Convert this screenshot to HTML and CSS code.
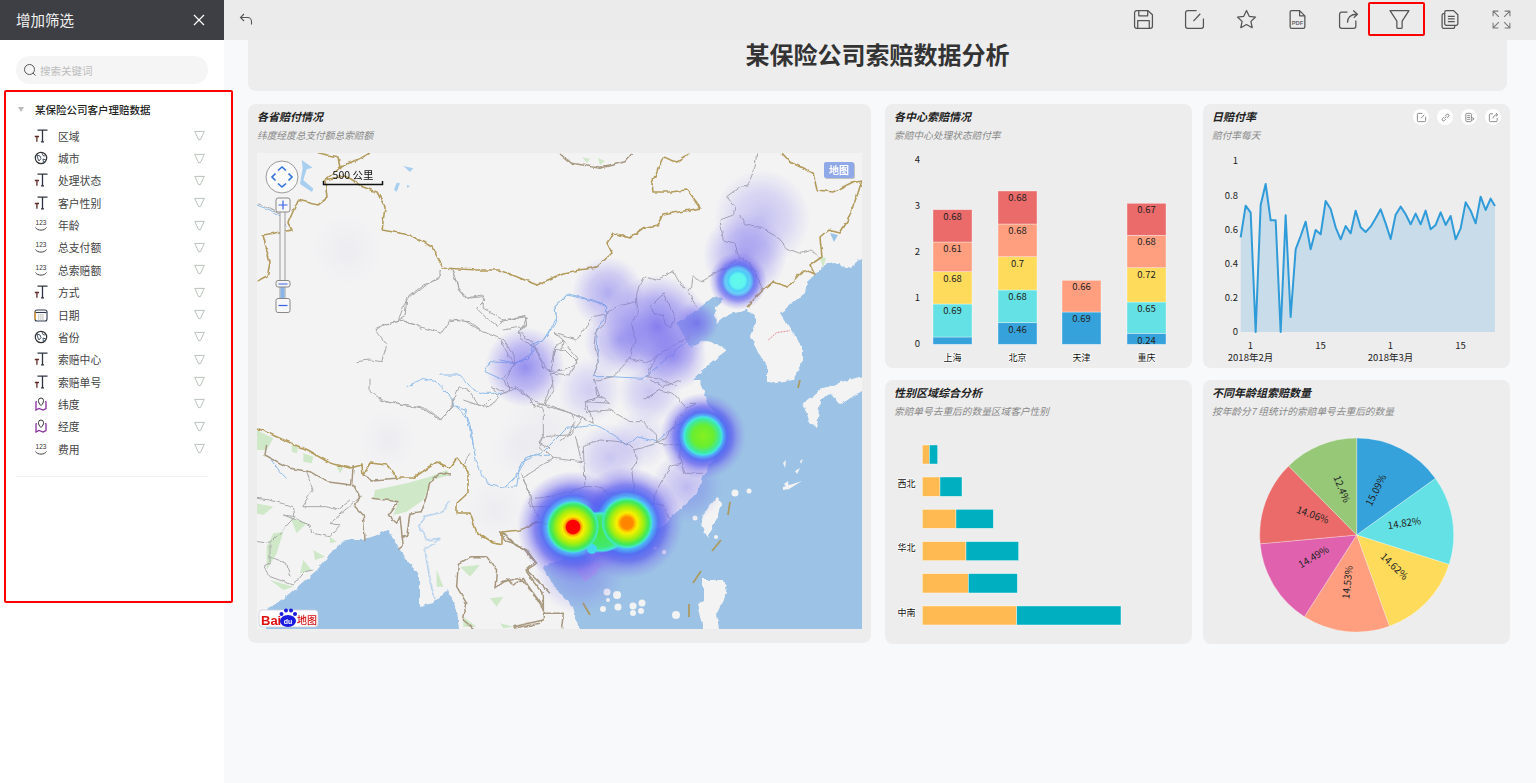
FILE: index.html
```html
<!DOCTYPE html>
<html lang="zh-CN">
<head>
<meta charset="utf-8">
<title>某保险公司索赔数据分析</title>
<link rel="stylesheet" href="styles.css">
</head>
<body>
<svg class="defs" width="0" height="0" aria-hidden="true">
  <defs>
    <filter id="f-wobble" filterUnits="userSpaceOnUse" x="240" y="140" width="640" height="510">
      <feTurbulence type="fractalNoise" baseFrequency=".13" numOctaves="2" seed="4"/>
      <feDisplacementMap in="SourceGraphic" scale="4" xChannelSelector="R" yChannelSelector="G"/>
    </filter>
    <filter id="f-coast" filterUnits="userSpaceOnUse" x="240" y="140" width="640" height="510">
      <feTurbulence type="fractalNoise" baseFrequency=".16" numOctaves="2" seed="9"/>
      <feDisplacementMap in="SourceGraphic" scale="5" xChannelSelector="R" yChannelSelector="G"/>
    </filter>
    <symbol id="i-text" viewBox="0 0 14 14">
      <path d="M3.500 1.200H13.500M8.500 1.200V12.800M7 12.800H10" fill="none" stroke="#2e3540" stroke-width="1.300"/>
      <path d="M.8 7.500H5M2.900 7.500V12.800" fill="none" stroke="#5e2a26" stroke-width="1.300"/>
    </symbol>
    <symbol id="i-globe" viewBox="0 0 14 14">
      <circle cx="7" cy="7" r="5.700" fill="none" stroke="#333" stroke-width="1.200"/>
      <path d="M3 4l3 1 1 2.500-2 2.500-1-2zM8 2l1 2.500 2 .5M9 8l3 1-2.500 3z" fill="none" stroke="#4a5a6a" stroke-width="1"/>
    </symbol>
    <symbol id="i-num" viewBox="0 0 14 14">
      <text x="7" y="7" text-anchor="middle" class="num-glyph">123</text>
      <path d="M1.500 9.500C3.500 13 10.500 13 12.500 9.500" fill="none" stroke="#444" stroke-width="1"/>
    </symbol>
    <symbol id="i-date" viewBox="0 0 14 14">
      <rect x="1" y="2" width="12" height="11" rx="2" fill="none" stroke="#2f3a52" stroke-width="1.100"/>
      <path d="M1.200 3.500V11.500" fill="none" stroke="#f0a030" stroke-width="1.400"/>
      <path d="M1.500 4.500H12.500" stroke="#2f3a52" stroke-width="1.100"/>
      <path d="M4 7h6M4 9h6M4 11h6" stroke="#aaa" stroke-width="1" stroke-dasharray="1.500 .6"/>
    </symbol>
    <symbol id="i-pin" viewBox="0 0 14 14">
      <path d="M3 4.500L2 5V13L5 11.500 9 13 12 11.500V5L11 4.500" fill="none" stroke="#8a2fa0" stroke-width="1.300"/>
      <path d="M7 8.500C5 6.500 4.500 5.500 4.500 3.500A2.500 2.500 0 0 1 9.500 3.500C9.500 5.500 9 6.500 7 8.500Z" fill="#fff" stroke="#333" stroke-width="1"/>
    </symbol>
    <symbol id="i-filter" viewBox="0 0 12 12">
      <path d="M.8 1.500H11.200L7 10.500H5Z" fill="#fff" stroke="#b0bcb2" stroke-width="1"/>
    </symbol>
    <radialGradient id="g-violet">
      <stop offset="0" stop-color="#6a60ec" stop-opacity=".8"/>
      <stop offset=".55" stop-color="#7a70ee" stop-opacity=".5"/>
      <stop offset="1" stop-color="#8a80f0" stop-opacity="0"/>
    </radialGradient>
    <radialGradient id="g-faint">
      <stop offset="0" stop-color="#8080c0" stop-opacity=".05"/>
      <stop offset="1" stop-color="#8080c0" stop-opacity="0"/>
    </radialGradient>
    <radialGradient id="g-halo">
      <stop offset="0" stop-color="#44c8f8"/>
      <stop offset=".44" stop-color="#44c8f8"/>
      <stop offset=".56" stop-color="#4f66f2"/>
      <stop offset=".68" stop-color="#5f60ee" stop-opacity=".82"/>
      <stop offset=".82" stop-color="#7a70ee" stop-opacity=".42"/>
      <stop offset="1" stop-color="#8a80f0" stop-opacity="0"/>
    </radialGradient>
    <radialGradient id="g-red">
      <stop offset="0" stop-color="#f00"/>
      <stop offset=".26" stop-color="#f00"/>
      <stop offset=".31" stop-color="#ff9a00"/>
      <stop offset=".42" stop-color="#f8f000"/>
      <stop offset=".66" stop-color="#a0ee10"/>
      <stop offset=".86" stop-color="#40e858"/>
      <stop offset="1" stop-color="#44e8d8"/>
    </radialGradient>
    <radialGradient id="g-orange">
      <stop offset="0" stop-color="#ff8000"/>
      <stop offset=".25" stop-color="#ff8a00"/>
      <stop offset=".31" stop-color="#ffb800"/>
      <stop offset=".42" stop-color="#f8f000"/>
      <stop offset=".66" stop-color="#a0ee10"/>
      <stop offset=".86" stop-color="#40e858"/>
      <stop offset="1" stop-color="#44e8d8"/>
    </radialGradient>
    <radialGradient id="g-green">
      <stop offset="0" stop-color="#86f020"/>
      <stop offset=".55" stop-color="#68ee30"/>
      <stop offset=".85" stop-color="#40e8a0"/>
      <stop offset="1" stop-color="#44e8e8"/>
    </radialGradient>
    <radialGradient id="g-cyan">
      <stop offset="0" stop-color="#60fbe8"/>
      <stop offset=".7" stop-color="#60f4f0"/>
      <stop offset="1" stop-color="#44c8f8"/>
    </radialGradient>
    <radialGradient id="g-bridge">
      <stop offset="0" stop-color="#48e840"/>
      <stop offset=".72" stop-color="#40e870"/>
      <stop offset=".9" stop-color="#44e8d0"/>
      <stop offset="1" stop-color="#44c8f8" stop-opacity="0"/>
    </radialGradient>
  </defs>
</svg>

<div class="app">
  <aside class="side">
    <header class="side-head">
      <span class="side-title">增加筛选</span>
      <svg class="side-close" viewBox="0 0 12 12" width="12" height="12"><path d="M1 1L11 11M11 1L1 11" stroke="#fff" stroke-width="1.200"/></svg>
    </header>
    <div class="search">
      <svg viewBox="0 0 14 14" width="14" height="14"><circle cx="6.500" cy="6.500" r="5" fill="none" stroke="#555" stroke-width="1"/><path d="M10 10L12.500 12.500" stroke="#555" stroke-width="1"/></svg>
      <span class="search-ph">搜索关键词</span>
    </div>
    <section class="tree">
      <div class="tree-head"><span class="caret"></span><span>某保险公司客户理赔数据</span></div>
      <ul class="fields">
        <li class="field"><svg class="f-ic"><use href="#i-text"/></svg><span class="f-name">区域</span><svg class="f-flt"><use href="#i-filter"/></svg></li>
        <li class="field"><svg class="f-ic"><use href="#i-globe"/></svg><span class="f-name">城市</span><svg class="f-flt"><use href="#i-filter"/></svg></li>
        <li class="field"><svg class="f-ic"><use href="#i-text"/></svg><span class="f-name">处理状态</span><svg class="f-flt"><use href="#i-filter"/></svg></li>
        <li class="field"><svg class="f-ic"><use href="#i-text"/></svg><span class="f-name">客户性别</span><svg class="f-flt"><use href="#i-filter"/></svg></li>
        <li class="field"><svg class="f-ic"><use href="#i-num"/></svg><span class="f-name">年龄</span><svg class="f-flt"><use href="#i-filter"/></svg></li>
        <li class="field"><svg class="f-ic"><use href="#i-num"/></svg><span class="f-name">总支付额</span><svg class="f-flt"><use href="#i-filter"/></svg></li>
        <li class="field"><svg class="f-ic"><use href="#i-num"/></svg><span class="f-name">总索赔额</span><svg class="f-flt"><use href="#i-filter"/></svg></li>
        <li class="field"><svg class="f-ic"><use href="#i-text"/></svg><span class="f-name">方式</span><svg class="f-flt"><use href="#i-filter"/></svg></li>
        <li class="field"><svg class="f-ic"><use href="#i-date"/></svg><span class="f-name">日期</span><svg class="f-flt"><use href="#i-filter"/></svg></li>
        <li class="field"><svg class="f-ic"><use href="#i-globe"/></svg><span class="f-name">省份</span><svg class="f-flt"><use href="#i-filter"/></svg></li>
        <li class="field"><svg class="f-ic"><use href="#i-text"/></svg><span class="f-name">索赔中心</span><svg class="f-flt"><use href="#i-filter"/></svg></li>
        <li class="field"><svg class="f-ic"><use href="#i-text"/></svg><span class="f-name">索赔单号</span><svg class="f-flt"><use href="#i-filter"/></svg></li>
        <li class="field"><svg class="f-ic"><use href="#i-pin"/></svg><span class="f-name">纬度</span><svg class="f-flt"><use href="#i-filter"/></svg></li>
        <li class="field"><svg class="f-ic"><use href="#i-pin"/></svg><span class="f-name">经度</span><svg class="f-flt"><use href="#i-filter"/></svg></li>
        <li class="field"><svg class="f-ic"><use href="#i-num"/></svg><span class="f-name">费用</span><svg class="f-flt"><use href="#i-filter"/></svg></li>
      </ul>
      <div class="tree-rule"></div>
    </section>
  </aside>

  <div class="right">
    <nav class="toolbar">
      <svg class="back" viewBox="0 0 14 14" width="14" height="14"><path d="M5 2L1.500 5.500 5 9M1.500 5.500H8.500C11 5.500 12.500 7.500 12.500 9.500V12.500" fill="none" stroke="#555" stroke-width="1.100"/></svg>
      <div class="tools">
        <span class="tool"><svg viewBox="0 0 20 20" width="21" height="21"><path d="M3.500 1.500H14L18.500 5.500V16.500A2 2 0 0 1 16.500 18.500H3.500A2 2 0 0 1 1.500 16.500V3.500A2 2 0 0 1 3.500 1.500Z" class="ts"/><path d="M5.500 1.500V6.500H14V1.500M4.500 18.500V11H15.500V18.500" class="ts"/></svg></span>
        <span class="tool"><svg viewBox="0 0 20 20" width="21" height="21"><path d="M12 1.500H3.500A2 2 0 0 0 1.500 3.500V16.500A2 2 0 0 0 3.500 18.500H16.500A2 2 0 0 0 18.500 16.500V9M15.500 4.500L9 11.500" class="ts"/></svg></span>
        <span class="tool"><svg viewBox="0 0 20 20" width="21" height="21"><path d="M10 1.500L12.600 7 18.600 7.700 14.200 11.800 15.400 17.800 10 14.800 4.600 17.800 5.800 11.800 1.400 7.700 7.400 7Z" class="ts"/></svg></span>
        <span class="tool"><svg viewBox="0 0 20 20" width="21" height="21"><path d="M3 17V3A1.500 1.500 0 0 1 4.500 1.500H12L17 6.500V17A1.500 1.500 0 0 1 15.500 18.500H4.500A1.500 1.500 0 0 1 3 17ZM12 1.500V6.500H17" class="ts"/><text x="10" y="15" text-anchor="middle" class="pdf-glyph">PDF</text></svg></span>
        <span class="tool"><svg viewBox="0 0 20 20" width="21" height="21"><path d="M9 3H3.500A2 2 0 0 0 1.500 5V16.500A2 2 0 0 0 3.500 18.500H15A2 2 0 0 0 17 16.500V11M9 13C9 8 12 5 18 5M14.500 1.500L18.500 5 15 8.500" class="ts"/></svg></span>
        <span class="tool tool-on"><svg viewBox="0 0 20 20" width="21" height="21"><path d="M1 1.500H19L12.500 11.500V17.500A1 1 0 0 1 11.500 18.500H8.500A1 1 0 0 1 7.500 17.500V11.500Z" class="ts"/></svg></span>
        <span class="tool"><svg viewBox="0 0 20 20" width="21" height="21"><path d="M6 1.500H13L17 5.500V14A1.500 1.500 0 0 1 15.500 15.500H6A1.500 1.500 0 0 1 4.500 14V3A1.500 1.500 0 0 1 6 1.500ZM4.500 4.500H3.500A1.500 1.500 0 0 0 2 6V17A1.500 1.500 0 0 0 3.500 18.500H12.500A1.500 1.500 0 0 0 14 17V15.500M7.500 7H14M7.500 9.500H14M7.500 12H14" class="ts"/></svg></span>
        <span class="tool"><svg viewBox="0 0 20 20" width="21" height="21"><path d="M2 7V2H7M2 2L7.500 7.500M13 2H18V7M18 2L12.500 7.500M2 13V18H7M2 18L7.500 12.500M13 18H18V13M18 18L12.500 12.500" class="ts ts-light"/></svg></span>
      </div>
    </nav>

    <main class="content">
      <div class="banner"><h1>某保险公司索赔数据分析</h1></div>
      <div class="board">
        <article class="card card-map">
          <header class="card-head"><div><h2>各省赔付情况</h2><p>纬度经度总支付额总索赔额</p></div></header>
          <svg class="map" viewBox="257 153 605 476" width="605" height="476">
            <rect x="257" y="153" width="605" height="476" fill="#f3f3f4"/>
            <!-- sea -->
            <g class="coast">
              <polygon fill="#9cc3e6" points="880,250 862,258 847,269 833,262 825,265 807,282 805,293 780,313 802,347 802,363 793,380 767,383 767,367 757,350 750,337 757,320 747,310 727,315 717,323 713,313 723,298 713,297 697,310 677,323 690,347 707,340 727,350 710,363 692,380 700,380 708,403 720,420 717,447 713,460 703,477 697,493 670,518 663,527 648,530 640,540 610,547 593,557 573,553 543,568 555,587 573,607 582,640 880,640"/>
              <polygon fill="#9cc3e6" points="267,640 267,608 277,603 290,593 317,570 340,543 350,540 363,540 388,530 398,547 407,560 420,577 420,607 433,603 447,590 457,610 460,640"/>
              <g fill="#f3f3f4">
                <polygon points="803,403 820,390 840,382 870,376 870,385 840,405 830,393 820,400 817,427 810,423"/>
                <polygon points="700,523 707,507 717,498 722,502 717,517 708,538 702,527"/>
                <polygon points="703,580 723,580 727,593 717,613 720,640 707,640 700,617 697,603 703,600"/>
                <polygon points="820,389 840,383 870,374 870,380 840,390 825,395"/>
              </g>
            </g>
            <g fill="#f3f3f4">
              <polygon points="783,463 786,460 785,468"/><polygon points="802,481 789,489 783,490 783,487"/>
              <polygon points="784,484 788,481 789,490"/><polygon points="770,358 773,356 772,364"/>
              <polygon points="800,461 803,459 801,464"/><polygon points="795,471 800,468 797,474"/>
              <circle cx="607" cy="592" r="3.500"/><circle cx="617" cy="595" r="4"/><circle cx="608" cy="600" r="2"/><circle cx="603" cy="609" r="3"/><circle cx="618" cy="607" r="3.500"/><circle cx="633" cy="606" r="3.500"/><circle cx="642" cy="603" r="3.500"/><circle cx="641" cy="611" r="3"/><circle cx="633" cy="613" r="3"/><circle cx="676" cy="615" r="4"/>
              <circle cx="735" cy="493" r="3.500"/><circle cx="749" cy="491" r="2.500"/><circle cx="664" cy="552" r="2.200"/><circle cx="655" cy="548" r="1.800"/>
              <circle cx="695" cy="518" r="2.500"/><circle cx="716" cy="537" r="2"/>
            </g>
            <polygon fill="#b6adec" points="576,570 590,562 602,562 597,573 585,582"/>
            <!-- land cover -->
            <g class="z9 green" transform="translate(250 400) scale(.3333)">
              <polygon points="20,90 70,115 50,150 20,150"/><polygon points="125,135 145,140 140,160 125,155"/><polygon points="160,160 190,170 185,190 160,185"/><polygon points="260,200 280,205 270,220"/><polygon points="375,270 470,250 540,230 590,210 600,225 545,240 520,300 470,335 430,345 445,305 370,295"/><polygon points="20,310 70,320 40,345 20,340"/><polygon points="70,400 100,395 80,460 50,510 50,440"/><polygon points="120,350 170,370 140,400"/><polygon points="190,450 225,470 195,480"/><polygon points="160,480 185,510 150,520"/><polygon points="60,540 130,560 100,570"/><polygon points="240,410 260,425 240,430"/><polygon points="630,500 690,495 660,530"/><polygon points="720,595 760,590 740,620"/><polygon points="640,650 680,680 640,680"/><polygon points="750,670 790,680 760,685"/><polygon points="560,510 580,560 560,560"/>
            </g>
            <polygon fill="#cfe8c8" points="582,157 590,159 587,163"/><polygon fill="#cfe8c8" points="598,158 605,161 600,165"/><polygon fill="#cfe8c8" points="820,257 826,258 823,268"/>
            <!-- water -->
            <g class="z3 lake" transform="translate(250 100) scale(.3333)">
              <polygon points="155,180 188,203 170,208 160,240 190,266 186,276 150,252 158,205"/><polygon points="460,198 490,205 480,216"/><polygon points="440,248 450,250 440,275 432,270"/><polygon points="470,255 480,258 472,264"/>
            </g>
            <polygon fill="#9cc3e6" points="830,233 838,235 834,242"/>
            <g class="wob">
              <!-- rivers -->
              <g class="lines river">
                <polyline transform="translate(500 150) scale(.3333)" points="0,630 50,640 95,610 100,590 130,570 170,515 165,470 205,432 280,450 320,470 320,490 290,540 295,640 280,680 330,680 430,685 530,600 570,565"/>
                <polyline transform="translate(500 380) scale(.3333)" points="0,325 50,320 60,250 130,215 200,145 290,135 350,170 380,195 410,170 470,185 510,150 550,130 590,95 620,105"/>
                <polyline transform="translate(250 400) scale(.3333)" points="610,15 650,50 665,110 680,190 700,230 720,255 760,265 790,240 810,210 830,170 900,165"/>
                <polyline transform="translate(250 400) scale(.3333)" points="600,300 580,335 520,350 510,380 530,420 570,415 525,450 540,540 555,600"/>
                <polyline transform="translate(250 400) scale(.3333)" points="60,175 90,215 110,235"/>
                <polyline transform="translate(250 100) scale(.3333)" points="20,315 60,330 90,350 110,380"/>
                <g transform="translate(370 265) scale(.3333)">
                  <polyline points="110,365 160,340 200,350 250,405 255,425 285,435 300,480 310,540"/>
                  <polyline points="210,330 270,330 310,375 345,385 400,385"/>
                  <polyline points="400,345 345,320 360,290 430,295 470,285 495,250 480,240 520,225 560,160 555,125 590,90 660,105 710,125"/>
                </g>
              </g>
              <!-- provinces -->
              <g class="lines prov">
                <g transform="translate(250 100) scale(.3333)">
                  <polyline points="20,310 50,320 90,340"/>
                  <polyline points="375,690 445,660 500,675 515,690"/>
                  <polyline points="570,510 570,530 520,560 470,600 465,650 445,660"/>
                  <polyline points="605,505 625,570 650,595 700,590 700,625 760,660 830,650 820,680 760,690"/>
                  <polyline points="600,665 640,660 690,690"/>
                </g>
                <g transform="translate(370 265) scale(.3333)">
                  <polyline points="245,8 265,70 285,100 335,90 345,105 320,130 345,155 385,185 400,165 465,152 470,180 445,200 450,220 480,240"/>
                  <polyline points="215,10 210,40 160,60 110,100 85,165"/>
                  <polyline points="15,190 90,165 150,185 215,205 240,165 300,170 340,200 400,225 430,270 435,295 400,340 410,365 430,365 480,400 490,425 525,415 550,380 545,325 515,300 500,250 480,240"/>
                  <polyline points="15,190 50,240 35,290 0,285 -40,290"/>
                  <polyline points="0,340 0,380 45,410 120,425 170,435 210,465 250,425 250,400 265,365 300,380 325,420 360,425 385,395 365,365 410,385 420,365"/>
                  <polyline points="525,415 590,440 640,460 670,475 650,410 720,415"/>
                  <polyline points="545,325 600,330 620,290 585,255 555,250 545,290 545,320"/>
                  <polyline points="575,250 580,225 555,205 620,225 670,155 715,145"/>
                  <polyline points="640,460 600,510 570,530"/>
                  <polyline points="675,345 680,390 720,415"/>
                </g>
                <g transform="translate(500 150) scale(.3333)">
                  <polyline points="770,10 765,50 745,105 720,110 680,140 705,170 700,195 660,210 670,270 705,280 715,320 750,340 790,420"/>
                  <polyline points="720,195 735,225 785,235 830,260 860,295 900,310 935,300 960,325"/>
                  <polyline points="715,325 680,350 610,390 600,395 580,375 575,410 565,430 590,470"/>
                  <polyline points="520,365 500,375 470,390 430,380 410,430 410,455 350,470 320,490 315,520 290,540 285,590 295,640 280,680"/>
                  <polyline points="410,455 415,490 395,520 405,570 390,625 440,640 470,620 530,580 570,560"/>
                  <polyline points="520,365 540,400 560,415"/>
                  <polygon points="490,432 450,470 465,495 490,495 495,525 510,535 525,510 510,470"/>
                  <polyline points="390,625 340,680 290,690"/>
                  <polyline points="0,515 75,497 80,520 55,545 100,580 125,635 150,665 190,660 230,640 230,625 190,570 160,595 160,640"/>
                  <polyline points="0,570 40,640 20,690 30,720"/>
                  <polyline points="470,620 440,680 490,690 530,710"/>
                </g>
                <g transform="translate(500 380) scale(.3333)">
                  <polyline points="0,45 50,20 100,60 130,75 160,0"/>
                  <polyline points="130,75 215,100 225,125 205,165 130,170 120,200 160,235 245,245 225,165"/>
                  <polyline points="280,0 300,50 255,65 260,95 330,90 390,125 430,125 470,165 470,190 405,210 390,195 360,185 300,180 250,200 255,320 305,320 320,340 400,350"/>
                  <polyline points="430,60 480,30 520,40 560,85 545,100 500,170 470,190"/>
                  <polyline points="470,190 540,195 540,240 555,280 610,280"/>
                  <polyline points="405,210 410,250 395,270 405,350 460,375 490,375 510,420"/>
                  <polyline points="540,250 510,260 470,330 460,375"/>
                  <polyline points="160,235 70,290 70,300 90,340 105,390 120,420"/>
                  <polyline points="105,355 180,345 255,320"/>
                  <polyline points="450,0 490,20 540,0"/>
                  <polyline points="560,85 590,70 570,70"/>
                </g>
                <g transform="translate(250 400) scale(.3333)">
                  <polyline points="20,295 60,300 130,320 135,350 100,345 180,375 185,400 240,410 270,375 240,370 300,320 330,290"/>
                  <polyline points="155,320 230,320 260,330 300,300"/>
                  <polyline points="170,215 190,270 155,320"/>
                  <polyline points="20,425 60,430 60,490 40,500 60,530 130,555 165,515 190,510"/>
                  <polyline points="135,350 60,430"/>
                  <polyline points="60,470 110,490 120,530"/>
                  <polyline points="390,0 450,15 530,25 575,60 610,15 610,0"/>
                  <polyline points="840,10 880,25 880,105 870,130 900,145"/>
                  <polyline points="815,220 840,290 840,320 900,320"/>
                  <polyline points="660,160 640,190"/>
                  <polyline points="640,0 700,20 720,0"/>
                </g>
              </g>
              <!-- foreign borders -->
              <g class="lines brown">
                <polyline transform="translate(500 150) scale(.3333)" points="180,12 215,40 300,55 375,35 395,12"/>
                <g transform="translate(250 400) scale(.3333)">
                  <polyline points="50,135 45,165 120,205 180,215 230,245 305,255 310,195"/>
                  <polyline points="340,225 365,240 440,235"/>
                  <polyline points="310,255 330,290 315,320 340,345 345,420"/>
                  <polyline points="365,295 445,305 415,345 440,370 450,350 460,440 445,450"/>
                  <polyline points="600,225 570,220 540,245 530,290 515,335 480,340 470,410 455,405"/>
                  <polyline points="710,470 660,470 625,490 620,560 650,610 640,660 670,685"/>
                  <polyline points="710,470 740,510 735,565 770,540 790,555 820,535 850,580 880,630 880,660 790,680"/>
                  <polyline points="755,395 790,430 830,450 860,490 830,510 900,580"/>
                </g>
                <g transform="translate(500 380) scale(.3333)">
                  <polyline points="0,455 15,480 70,505 105,545 75,570 130,640 130,700 190,700 185,745"/>
                  <polyline points="0,605 60,595 100,640 130,680"/>
                  <polyline points="40,745 120,730"/>
                </g>
              </g>
              <!-- China borders -->
              <g class="lines gold">
                <polyline points="257,282 267,277 270,263 263,235 292,230 288,223 298,200 318,205 327,198 325,180 340,168 338,157 318,153"/>
                <polyline points="338,168 363,157 370,153"/>
                <polyline points="325,180 345,176 363,187 377,192 385,207 382,230 410,235 432,247 443,268 477,270 500,270 537,285 563,273 597,267 612,253 607,243 613,233 630,238 643,228 657,225 663,215 700,208 687,190 670,192 653,192 652,183 663,157 677,162 690,154"/>
                <polyline points="782,153 790,162 813,173 817,190 833,192 853,182 862,180 858,193 847,222 840,233 828,230 820,237 822,257 810,265 815,275 803,270 788,287 773,282 763,290 747,307"/>
                <polyline points="257,428 277,437 307,450 330,463 350,468 362,465 363,475 370,463 387,465 397,478 413,478 437,462 450,468 457,458 468,472 468,493 457,503 457,513 470,513 477,533 493,543 502,545 502,532 520,530 537,522 550,525"/>
              </g>
            </g>
            <polyline class="lines kp" transform="translate(500 150) scale(.3333)" points="805,570 830,548 870,542"/>
            <g class="dash">
              <path d="M730 502L728 515M721 540L712 551M701 571L693 583M689 604L689 617M583 603L590 615M800 380L798 388"/>
            </g>
            <!-- heat -->
            <g class="heat">
              <circle cx="347" cy="250" r="36" fill="url(#g-faint)"/>
              <circle cx="388" cy="440" r="30" fill="url(#g-faint)"/>
              <circle cx="495" cy="510" r="32" fill="url(#g-faint)"/>
              <circle cx="545" cy="430" r="45" fill="url(#g-faint)"/>
              <circle cx="520" cy="450" r="30" fill="url(#g-faint)"/>
              <circle cx="762" cy="218" r="48" fill="url(#g-violet)" opacity=".42"/>
              <circle cx="745" cy="255" r="42" fill="url(#g-violet)" opacity=".68"/>
              <circle cx="608" cy="293" r="36" fill="url(#g-violet)" opacity=".6"/>
              <circle cx="657" cy="327" r="52" fill="url(#g-violet)"/>
              <circle cx="525" cy="367" r="40" fill="url(#g-violet)" opacity=".85"/>
              <circle cx="673" cy="357" r="34" fill="url(#g-violet)" opacity=".7"/>
              <circle cx="620" cy="340" r="36" fill="url(#g-violet)" opacity=".6"/>
              <circle cx="697" cy="323" r="22" fill="url(#g-violet)" opacity=".9"/>
              <circle cx="610" cy="457" r="34" fill="url(#g-violet)" opacity=".38"/>
              <circle cx="687" cy="487" r="36" fill="url(#g-violet)" opacity=".48"/>
              <circle cx="650" cy="392" r="32" fill="url(#g-violet)" opacity=".38"/>
              <circle cx="590" cy="390" r="32" fill="url(#g-violet)" opacity=".32"/>
              <circle cx="580" cy="568" r="46" fill="url(#g-violet)" opacity=".55"/>
              <circle cx="640" cy="440" r="30" fill="url(#g-violet)" opacity=".22"/>
              <circle cx="738" cy="281" r="29" fill="url(#g-halo)" opacity=".8"/>
              <circle cx="703" cy="436" r="43" fill="url(#g-halo)" opacity=".92"/>
              <circle cx="573" cy="527" r="56" fill="url(#g-halo)" opacity=".92"/>
              <circle cx="627" cy="523" r="56" fill="url(#g-halo)" opacity=".92"/>
              <ellipse cx="600" cy="532" rx="28" ry="21" fill="url(#g-bridge)"/>
              <ellipse cx="592" cy="549" rx="5" ry="5" fill="#44d8ee"/>
              <circle cx="738" cy="281" r="10.500" fill="url(#g-cyan)"/>
              <circle cx="703" cy="436" r="19.500" fill="url(#g-green)"/>
              <circle cx="573" cy="527" r="25.500" fill="url(#g-red)"/>
              <circle cx="627" cy="523" r="25" fill="url(#g-orange)"/>
            </g>
            <!-- controls -->
            <g class="scale">
              <path d="M323.500 181V184.500H382.500V181" fill="none" stroke="#111" stroke-width="1.500"/>
              <text x="353" y="179" text-anchor="middle" class="scale-t">500 公里</text>
            </g>
            <circle cx="282" cy="177" r="16" fill="#fafafa" stroke="#999"/>
            <path d="M278 170.500L282 167 286 170.500M278 183.500L282 187 286 183.500M275.500 173.500L272 177 275.500 180.500M288.500 173.500L292 177 288.500 180.500" fill="none" stroke="#2f72d8" stroke-width="1.600"/>
            <rect x="280" y="210" width="5" height="90" fill="#f4f4f4" stroke="#888" stroke-width=".8"/>
            <rect x="280.500" y="287" width="4" height="12" fill="#8ab4e8"/>
            <rect x="276" y="198" width="14" height="14" rx="2" fill="#f7f7f7" stroke="#888"/>
            <path d="M278.500 205H287.500M283 200.500V209.500" stroke="#3a62e8" stroke-width="1.200"/>
            <rect x="276" y="280.500" width="14" height="6.500" rx="2" fill="#f4f4f4" stroke="#888"/>
            <path d="M278.500 284H287.500" stroke="#3a62e8"/>
            <rect x="276" y="298.500" width="14" height="14" rx="2" fill="#f7f7f7" stroke="#888"/>
            <path d="M278.500 305.500H287.500" stroke="#3a62e8" stroke-width="1.200"/>
            <rect x="825" y="163" width="30" height="16" rx="2" fill="#66666a" opacity=".35"/>
            <rect x="824" y="162" width="30" height="16" rx="2" fill="#8ea8e8"/>
            <text x="839" y="174" text-anchor="middle" class="mapbtn-t">地图</text>
            <!-- logo -->
            <rect x="259" y="610" width="59" height="17" rx="3" fill="#fff" stroke="#ccd" stroke-width=".8"/>
            <text x="261" y="624.500" class="logo-bai">Bai</text>
            <g fill="#1a1ae0">
              <ellipse cx="288" cy="621" rx="8" ry="6"/><circle cx="281.500" cy="614" r="2"/><circle cx="286" cy="610.500" r="2"/><circle cx="291" cy="610.500" r="2"/><circle cx="295" cy="614" r="2"/>
            </g>
            <text x="288" y="624" text-anchor="middle" class="logo-du">du</text>
            <text x="297" y="624" class="logo-map">地图</text>
          </svg>
        </article>

        <div class="board-side">
          <article class="card">
            <header class="card-head"><div><h2>各中心索赔情况</h2><p>索赔中心处理状态赔付率</p></div></header>
            <svg class="chart" viewBox="885 150 307 218" width="307" height="218">
              <g class="axis-r">
                <text x="920" y="163">4</text><text x="920" y="209">3</text><text x="920" y="255">2</text><text x="920" y="301">1</text><text x="920" y="347">0</text>
              </g>
              <g class="bars">
                <rect class="c-blue" x="933" y="337" width="39" height="7.300"/><rect class="c-cyan" x="933" y="304" width="39" height="33"/><rect class="c-yel" x="933" y="271.700" width="39" height="32.300"/><rect class="c-sal" x="933" y="242" width="39" height="29.700"/><rect class="c-red" x="933" y="209.700" width="39" height="32.300"/>
                <rect class="c-blue" x="998" y="322.700" width="39" height="21.600"/><rect class="c-cyan" x="998" y="290" width="39" height="32.700"/><rect class="c-yel" x="998" y="256.700" width="39" height="33.300"/><rect class="c-sal" x="998" y="224" width="39" height="32.700"/><rect class="c-red" x="998" y="191" width="39" height="33"/>
                <rect class="c-blue" x="1062" y="312" width="39" height="32.300"/><rect class="c-sal" x="1062" y="280.300" width="39" height="31.700"/>
                <rect class="c-blue" x="1127" y="333.300" width="39" height="11"/><rect class="c-cyan" x="1127" y="302" width="39" height="31.300"/><rect class="c-yel" x="1127" y="267.700" width="39" height="34.300"/><rect class="c-sal" x="1127" y="235.300" width="39" height="32.400"/><rect class="c-red" x="1127" y="203.300" width="39" height="32"/>
              </g>
              <g class="val">
                <text x="952.500" y="219.500">0.68</text><text x="952.500" y="252">0.61</text><text x="952.500" y="281.500">0.68</text><text x="952.500" y="314">0.69</text>
                <text x="1017.500" y="201">0.68</text><text x="1017.500" y="234">0.68</text><text x="1017.500" y="266.500">0.7</text><text x="1017.500" y="300">0.68</text><text x="1017.500" y="332.500">0.46</text>
                <text x="1081.500" y="290">0.66</text><text x="1081.500" y="322">0.69</text>
                <text x="1146.500" y="213">0.67</text><text x="1146.500" y="245">0.68</text><text x="1146.500" y="278">0.72</text><text x="1146.500" y="312">0.65</text><text x="1146.500" y="343.500">0.24</text>
              </g>
              <g class="cat">
                <text x="952.500" y="361">上海</text><text x="1017.500" y="361">北京</text><text x="1081.500" y="361">天津</text><text x="1146.500" y="361">重庆</text>
              </g>
            </svg>
          </article>

          <article class="card">
            <header class="card-head">
              <div><h2>日赔付率</h2><p>赔付率每天</p></div>
              <div class="acts">
                <span class="act"><svg viewBox="0 0 12 12" width="11" height="11"><path d="M7 1.500H2.500A1 1 0 0 0 1.500 2.500V9.500A1 1 0 0 0 2.500 10.500H9.500A1 1 0 0 0 10.500 9.500V5M9 3L5.500 7" class="as"/></svg></span>
                <span class="act"><svg viewBox="0 0 12 12" width="11" height="11"><path d="M5 7L7 5M4.500 5.500L2.300 7.700A1.600 1.600 0 0 0 4.300 9.700L6.500 7.500M5.500 4.500L7.700 2.300A1.600 1.600 0 0 1 9.700 4.300L7.500 6.500" class="as"/></svg></span>
                <span class="act"><svg viewBox="0 0 12 12" width="11" height="11"><path d="M2 2.500A1 1 0 0 1 3 1.500H7A1 1 0 0 1 8 2.500V9.500A1 1 0 0 1 7 10.500H3A1 1 0 0 1 2 9.500ZM3.500 4H6.500M3.500 6H6.500M3.500 8H6.500M8 5.500L11 7.500 8 9.500" class="as"/></svg></span>
                <span class="act"><svg viewBox="0 0 12 12" width="11" height="11"><path d="M5.500 2H2.500A1 1 0 0 0 1.500 3V9.500A1 1 0 0 0 2.500 10.500H9A1 1 0 0 0 10 9.500V6.500M5.500 7C5.500 4.500 7.500 3 10.500 3M8.500 1L10.500 3 8.500 5" class="as"/></svg></span>
              </div>
            </header>
            <svg class="chart" viewBox="1203 150 307 218" width="307" height="218">
              <g transform="translate(1200 100) scale(.3333)">
                <polygon class="area" points="122,696 122,412 137,317 152,338 167,696 182,315 197,252 212,361 227,361 242,696 257,346 272,651 287,448 302,408 317,365 332,448 347,390 362,403 377,303 392,327 407,382 422,418 437,378 452,400 467,332 482,382 497,396 512,380 527,355 542,328 557,370 572,417 587,344 602,320 617,343 632,373 647,341 662,373 677,332 692,388 707,375 722,337 737,375 752,348 767,418 782,385 797,307 812,332 827,370 842,290 857,330 872,296 885,318 885,696"/>
                <polyline class="line" points="122,412 137,317 152,338 167,696 182,315 197,252 212,361 227,361 242,696 257,346 272,651 287,448 302,408 317,365 332,448 347,390 362,403 377,303 392,327 407,382 422,418 437,378 452,400 467,332 482,382 497,396 512,380 527,355 542,328 557,370 572,417 587,344 602,320 617,343 632,373 647,341 662,373 677,332 692,388 707,375 722,337 737,375 752,348 767,418 782,385 797,307 812,332 827,370 842,290 857,330 872,296 885,318"/>
              </g>
              <g class="axis-r">
                <text x="1238" y="164">1</text><text x="1238" y="198.500">0.8</text><text x="1238" y="233">0.6</text><text x="1238" y="266.500">0.4</text><text x="1238" y="300.500">0.2</text><text x="1238" y="335">0</text>
              </g>
              <g class="ticks">
                <text x="1250.500" y="349">1</text><text x="1320.500" y="349">15</text><text x="1390.500" y="349">1</text><text x="1460.500" y="349">15</text>
                <text x="1250.500" y="361">2018年2月</text><text x="1390.500" y="361">2018年3月</text>
              </g>
            </svg>
          </article>

          <article class="card">
            <header class="card-head"><div><h2>性别区域综合分析</h2><p>索赔单号去重后的数量区域客户性别</p></div></header>
            <svg class="chart" viewBox="885 426 307 218" width="307" height="218">
              <g class="hbars" transform="translate(880 375) scale(.3333)">
                <rect class="c-or" x="127" y="210" width="21" height="57"/><rect class="c-teal" x="148" y="210" width="25" height="57"/>
                <rect class="c-or" x="127" y="306" width="53" height="58"/><rect class="c-teal" x="180" y="306" width="66" height="58"/>
                <rect class="c-or" x="127" y="403" width="101" height="57"/><rect class="c-teal" x="228" y="403" width="112" height="57"/>
                <rect class="c-or" x="127" y="500" width="131" height="57"/><rect class="c-teal" x="258" y="500" width="158" height="57"/>
                <rect class="c-or" x="127" y="596" width="138" height="58"/><rect class="c-teal" x="265" y="596" width="147" height="58"/>
                <rect class="c-or" x="127" y="693" width="283" height="57"/><rect class="c-teal" x="410" y="693" width="313" height="57"/>
              </g>
              <g class="cat">
                <text x="906.500" y="487">西北</text><text x="906.500" y="551">华北</text><text x="906.500" y="616">中南</text>
              </g>
            </svg>
          </article>

          <article class="card">
            <header class="card-head"><div><h2>不同年龄组索赔数量</h2><p>按年龄分7 组统计的索赔单号去重后的数量</p></div></header>
            <svg class="chart" viewBox="1203 426 307 218" width="307" height="218">
              <g class="pie" transform="translate(1356.700 535)">
                <path class="c-blue" d="M0 0V-97A97 97 0 0 1 78.800 -56.600Z"/>
                <path class="c-cyan" d="M0 0L78.800 -56.600A97 97 0 0 1 92.400 29.500Z"/>
                <path class="c-yel" d="M0 0L92.400 29.500A97 97 0 0 1 32.700 91.300Z"/>
                <path class="c-sal" d="M0 0L32.700 91.300A97 97 0 0 1 -52.300 81.700Z"/>
                <path class="c-mag" d="M0 0L-52.300 81.700A97 97 0 0 1 -96.600 8.800Z"/>
                <path class="c-red" d="M0 0L-96.600 8.800A97 97 0 0 1 -68.100 -69.100Z"/>
                <path class="c-grn" d="M0 0L-68.100 -69.100A97 97 0 0 1 0 -97Z"/>
                <g class="pie-t">
                  <text transform="translate(20 -44.500) rotate(-63)">15.09%</text>
                  <text transform="translate(47.700 -11) rotate(-9)">14.82%</text>
                  <text transform="translate(37 32) rotate(44)">14.62%</text>
                  <text transform="translate(-8.300 47.300) rotate(-84)">14.53%</text>
                  <text transform="translate(-42.700 22.700) rotate(-31)">14.49%</text>
                  <text transform="translate(-44.300 -19.300) rotate(20)">14.06%</text>
                  <text transform="translate(-15.700 -45.700) rotate(68)">12.4%</text>
                </g>
              </g>
            </svg>
          </article>
        </div>
      </div>
    </main>
  </div>
</div>
</body>
</html>
```

FILE: styles.css
```css
* { box-sizing: border-box; }
html, body { margin: 0; height: 100%; }
body {
  font-family: "Noto Sans CJK SC", "Liberation Sans", sans-serif;
  background: #f8f9fb;
  color: #333;
  overflow: hidden;
}
.defs { position: absolute; }
.app { display: flex; height: 783px; }

/* sidebar */
.side { width: 224px; flex: none; background: #fff; }
.side-head {
  height: 40px;
  background: #3e3f44;
  display: flex;
  align-items: center;
  justify-content: space-between;
  padding: 0 19px 0 16px;
}
.side-title { color: #f2f2f2; font-size: 14.500px; line-height: 40px; }
.search {
  margin: 16px 16px 6px;
  height: 28px;
  width: 192px;
  border-radius: 14px;
  background: #f5f5f5;
  display: flex;
  align-items: center;
  gap: 3px;
  padding-left: 7px;
}
.search-ph { font-size: 10.500px; color: #bdbdbd; }
.tree {
  margin-left: 4px;
  width: 229px;
  height: 513px;
  border: 2px solid #f00;
  border-radius: 2px;
  position: relative;
  background: #fff;
}
.tree-head {
  display: flex;
  align-items: center;
  height: 22px;
  margin-top: 6px;
  padding-left: 12px;
  font-size: 10.500px;
  font-weight: 500;
  color: #222;
}
.caret {
  width: 0; height: 0;
  border-left: 3px solid transparent;
  border-right: 3px solid transparent;
  border-top: 5px solid #bbb;
  margin-right: 11px;
}
.fields { list-style: none; margin: 4.500px 0 0; padding: 0; }
.field {
  height: 22.360px;
  display: flex;
  align-items: center;
  padding: 0 26px 0 28px;
  font-size: 10.800px;
  color: #444;
}
.f-ic { width: 14px; height: 14px; flex: none; }
.f-name { margin-left: 10px; flex: 1; }
.f-flt { width: 11px; height: 11px; flex: none; }
.num-glyph { font-size: 6.500px; font-family: "Liberation Sans", sans-serif; fill: #333; }
.tree-rule { margin: 16.500px 0 0 10px; width: 192px; border-top: 1px solid #efefef; }

/* toolbar */
.right { flex: 1; min-width: 0; display: flex; flex-direction: column; }
.toolbar {
  height: 40px;
  flex: none;
  background: #ebebeb;
  display: flex;
  align-items: center;
  justify-content: space-between;
  padding: 0 9px 2px 15px;
  position: relative;
  z-index: 2;
}
.tools { display: flex; align-items: center; }
.tool {
  width: 51.100px;
  height: 34px;
  display: flex;
  align-items: center;
  justify-content: center;
}
.tool-on {
  width: 57px;
  margin: 0 -3px;
  padding-left: 6px;
  border: 2px solid #f00;
  border-radius: 2px;
  position: relative;
  left: -2.500px;
}
.ts { fill: none; stroke: #555; stroke-width: 1.200; stroke-linejoin: round; }
.ts-light { stroke: #777; stroke-width: 1; }
.pdf-glyph { font-size: 5.500px; font-weight: 700; fill: #666; font-family: "Liberation Sans", sans-serif; }

/* content */
.content { flex: 1; padding: 0 26px 0 24px; }
.banner {
  height: 51px;
  margin-right: 3px;
  background: #ededed;
  border-radius: 0 0 8px 8px;
  text-align: center;
}
.banner h1 { margin: 0; font-size: 24px; line-height: 28px; font-weight: 700; color: #333; }
.board { display: flex; gap: 14px; margin-top: 13px; }
.board-side {
  display: grid;
  grid-template-columns: 307px 307px;
  grid-template-rows: 264px 264px;
  column-gap: 11px;
  row-gap: 12px;
}
.card { background: #ededed; border-radius: 8px; overflow: hidden; }
.card-map { width: 623px; height: 539px; flex: none; }
.card-head {
  display: flex;
  justify-content: space-between;
  padding: 5px 9px 0;
  height: 38px;
}
.card-head h2 {
  margin: 0;
  font-size: 11px;
  line-height: 14px;
  font-style: italic;
  font-weight: 700;
  color: #222;
}
.card-head p {
  margin: 4.500px 0 0;
  font-size: 9.700px;
  line-height: 14px;
  font-style: italic;
  color: #888;
}
.acts { display: flex; gap: 8px; margin: 0; }
.act {
  width: 16px;
  height: 16px;
  border-radius: 50%;
  background: #fff;
  display: flex;
  align-items: center;
  justify-content: center;
}
.as { fill: none; stroke: #777; stroke-width: .9; }
.map { display: block; margin: 11px 0 0 9px; }
.chart { display: block; margin-top: 8px; }

/* map */
.wob { filter: url(#f-wobble); }
.coast { filter: url(#f-coast); }
.lines polyline, .lines polygon, polyline.lines { vector-effect: non-scaling-stroke; fill: none; stroke-linejoin: round; }
.green polygon { fill: #cfe8c8; }
.lake polygon { fill: #a8cfef; }
.river polyline { stroke: #8dbbe8; stroke-width: 1; }
.prov polyline, .prov polygon { stroke: #a8a8a8; stroke-width: 1; }
.brown polyline { stroke: #a6977e; stroke-width: 1.500; }
.gold polyline { stroke: #b39b5c; stroke-width: 1.600; }
.kp { stroke: #e08a90; stroke-width: 1; stroke-dasharray: 2 1; }
.dash path { fill: none; stroke: #ab9a62; stroke-width: 1.800; }
.scale-t { font-size: 10.500px; fill: #111; }
.mapbtn-t { font-size: 10px; font-weight: 700; fill: #fff; }
.logo-bai { font-family: "Liberation Sans", sans-serif; font-size: 13px; font-weight: 700; fill: #e01010; }
.logo-du { font-family: "Liberation Sans", sans-serif; font-size: 7px; font-weight: 700; fill: #fff; }
.logo-map { font-size: 10px; fill: #d01010; font-weight: 500; }

/* charts */
.c-blue { fill: #36a2db; }
.c-cyan { fill: #64e1e4; }
.c-yel { fill: #ffdb5c; }
.c-sal { fill: #ff9f7f; }
.c-red { fill: #eb6b6b; }
.c-mag { fill: #e062ae; }
.c-grn { fill: #96c878; }
.c-or { fill: #ffbb52; }
.c-teal { fill: #00b0c0; }
.bars rect { stroke: #fff; stroke-opacity: .5; stroke-width: .7; }
.hbars rect { stroke: #fff; stroke-opacity: .6; stroke-width: 2; }
.axis-r text { font-size: 9.500px; text-anchor: end; fill: #222; }
.val text { font-size: 9.500px; text-anchor: middle; fill: #222; }
.cat text { font-size: 9px; text-anchor: middle; fill: #111; paint-order: stroke; stroke: #fff; stroke-width: 1.500px; }
.ticks text { font-size: 9.500px; text-anchor: middle; fill: #222; }
.area { fill: #c9dcea; }
.line { fill: none; stroke: #2f9bd8; stroke-width: 6; stroke-linejoin: round; }
.pie path { stroke: #fff; stroke-opacity: .5; stroke-width: .6; }
.pie-t text { font-size: 9.800px; text-anchor: middle; dominant-baseline: middle; fill: #222; }
```
